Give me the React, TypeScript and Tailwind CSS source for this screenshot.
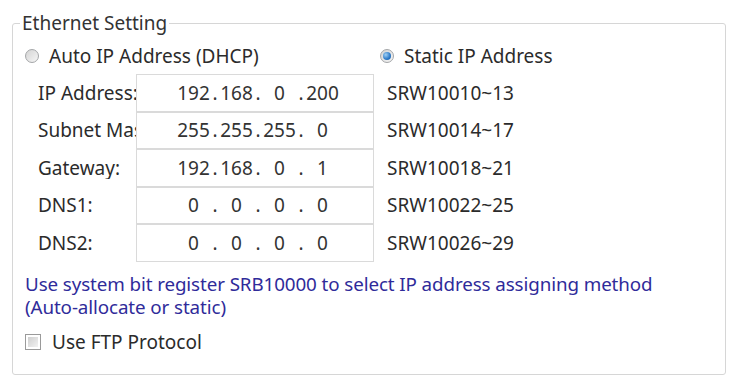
import React from "react";

const rows = [
    { label: "IP Address:", ip: ["192", "168", "0", "200"], reg: "SRW10010~13" },
    { label: "Subnet Mask:", ip: ["255", "255", "255", "0"], reg: "SRW10014~17" },
    { label: "Gateway:", ip: ["192", "168", "0", "1"], reg: "SRW10018~21" },
    { label: "DNS1:", ip: ["0", "0", "0", "0"], reg: "SRW10022~25" },
    { label: "DNS2:", ip: ["0", "0", "0", "0"], reg: "SRW10026~29" },
];

function Radio({ checked }: { checked?: boolean }) {
    return (
        <span className="flex h-[14px] w-[14px] shrink-0 items-center justify-center rounded-full border border-[#a4a6a8] bg-gradient-to-br from-[#d4d4d4] to-[#f6f6f6]">
            {checked && (
                <span className="h-[8px] w-[8px] rounded-full bg-[radial-gradient(circle_at_35%_35%,#9fd0f5,#2a78c6_60%,#1c5ea6)]" />
            )}
        </span>
    );
}

function IpField({ parts }: { parts: string[] }) {
    return (
        <div className="flex h-[37.5px] w-[238px] shrink-0 items-center justify-center border border-[#dadada] bg-white pl-[6px] text-[#333]">
            {parts.map((p, i) => (
                <React.Fragment key={i}>
                    <span className="w-[36px] text-center">{p}</span>
                    {i < 3 && <span className="w-[7px] text-center">.</span>}
                </React.Fragment>
            ))}
        </div>
    );
}

export default function App() {
    return (
        <div className="h-[384px] w-[737px] bg-white pl-[12px] pt-[13px] font-['Noto_Sans',sans-serif] text-[19px] leading-[22px] text-[#2b2b2b]">
            <fieldset className="h-[362px] w-[714px] rounded-[3px] border border-[#d6d6d6]">
                <legend className="ml-[7px] px-[2px] leading-[20px] text-[#333]">Ethernet Setting</legend>

                <div className="pl-[12px]">
                    <div className="mt-[13px] flex h-[20px] items-center">
                        <label className="flex w-[355px] items-center gap-[10px]">
                            <Radio />
                            <span>Auto IP Address (DHCP)</span>
                        </label>
                        <label className="flex items-center gap-[10px]">
                            <Radio checked />
                            <span>Static IP Address</span>
                        </label>
                    </div>

                    <div className="mt-[8px] flex flex-col">
                        {rows.map((r) => (
                            <div key={r.label} className="flex items-center">
                                <div className="w-[111px] shrink-0 overflow-hidden whitespace-nowrap pl-[13px]">{r.label}</div>
                                <IpField parts={r.ip} />
                                <div className="pl-[13px]">{r.reg}</div>
                            </div>
                        ))}
                    </div>

                    <p className="mt-[11px] text-[18.8px] leading-[23px] tracking-[-0.1px] text-[#2f2b9a]">
                        Use system bit register SRB10000 to select IP address assigning method
                        <br />
                        (Auto-allocate or static)
                    </p>

                    <label className="mt-[13px] flex h-[20px] items-center gap-[11px]">
                        <span className="h-[16px] w-[16px] shrink-0 border border-[#9a9a9a] bg-white p-[2px]">
                            <span className="block h-full w-full bg-gradient-to-br from-[#cfcfcf] to-[#f2f2f2]" />
                        </span>
                        <span>Use FTP Protocol</span>
                    </label>
                </div>
            </fieldset>
        </div>
    );
}
